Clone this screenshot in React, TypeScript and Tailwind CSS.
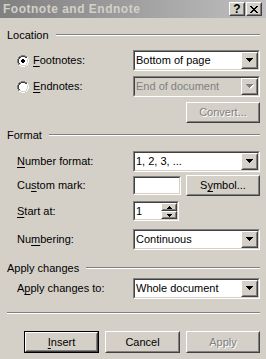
import React from "react";

const Sunken = ({ className = "", bg = "bg-white", children }: { className?: string; bg?: string; children?: React.ReactNode }) => (
  <div className={`border border-t-[#808080] border-l-[#808080] border-b-white border-r-white ${className}`}>
    <div className={`h-full w-full border border-t-[#404040] border-l-[#404040] border-b-[#d4d0c8] border-r-[#d4d0c8] ${bg}`}>
      {children}
    </div>
  </div>
);

const Raised = ({ className = "", children }: { className?: string; children?: React.ReactNode }) => (
  <div className={`border border-t-white border-l-white border-b-[#404040] border-r-[#404040] bg-[#d4d0c8] ${className}`}>
    <div className="h-full w-full border border-t-[#d4d0c8] border-l-[#d4d0c8] border-b-[#808080] border-r-[#808080] flex items-center justify-center">
      {children}
    </div>
  </div>
);

const Arrow = ({ disabled = false }: { disabled?: boolean }) => (
  <svg width="8" height="5" viewBox="0 0 8 5" className="overflow-visible">
    {disabled && <path d="M1 1h7v1H1zM2 2h5v1H2zM3 3h3v1H3zM4 4h1v1H4z" fill="#fff" />}
    <path d="M0 0h7v1H0zM1 1h5v1H1zM2 2h3v1H2zM3 3h1v1H3z" fill={disabled ? "#808080" : "#000"} />
  </svg>
);

const Combo = ({ value, disabled = false }: { value: string; disabled?: boolean }) => (
  <Sunken className="w-[127px] h-[21px]" bg={disabled ? "bg-[#d4d0c8]" : "bg-white"}>
    <div className="flex h-full">
      <div className={`flex-1 pl-[1px] flex items-center ${disabled ? "text-[#808080]" : "text-black"}`}>{value}</div>
      <Raised className="w-[17px] h-full">
        <Arrow disabled={disabled} />
      </Raised>
    </div>
  </Sunken>
);

const Button = ({ children, disabled = false, def = false, className = "" }: { children: React.ReactNode; disabled?: boolean; def?: boolean; className?: string }) => {
  const inner = (
    <Raised className="h-full w-full">
      <span className={disabled ? "text-[#808080] [text-shadow:1px_1px_0_#fff]" : "text-black"}>{children}</span>
    </Raised>
  );
  return def ? <div className={`border border-black ${className}`}>{inner}</div> : <div className={className}>{inner}</div>;
};

const Radio = ({ checked }: { checked?: boolean }) => (
  <svg width="12" height="12" viewBox="0 0 12 12">
    <path d="M4 0h4v1h2v1h1v2h1v4h-1v2h-1v1H8v1H4v-1H2v-1H1V8H0V4h1V2h1V1h2z" fill="#fff" />
    <path d="M4 0h4v1H4zM2 1h2v1H2zM8 1h2v1H8zM1 2h1v2H1zM0 4h1v4H0zM1 8h1v2H1z" fill="#808080" />
    <path d="M4 1h4v1H4zM2 2h2v1H2zM8 2h2v1H8zM2 3h1v1H2zM1 4h1v4H1zM2 8h1v1H2z" fill="#404040" />
    <path d="M10 8h1v2h-1zM11 4h1v4h-1zM10 10v1H8v-1zM8 11v1H4v-1zM4 11v-1H2v1z" fill="#fff" />
    <path d="M10 4h1v4h-1zM9 8h1v2H9zM8 10h1v1H8zM4 10h4v1H4zM2 9h2v1H2z" fill="#d4d0c8" />
    {checked && <path d="M5 4h2v1h1v2H7v1H5V7H4V5h1z" fill="#000" />}
  </svg>
);

const Header = ({ label }: { label: string }) => (
  <div className="flex items-center h-[14px] gap-[7px]">
    <span>{label}</span>
    <div className="flex-1 border-t border-t-[#808080] border-b border-b-white" />
  </div>
);

const U = ({ children }: { children: React.ReactNode }) => <span className="underline underline-offset-[2px]">{children}</span>;

const Row = ({ label, children, className = "" }: { label: React.ReactNode; children: React.ReactNode; className?: string }) => (
  <div className={`flex items-center ${className}`}>
    <div className="w-[126px] pl-[10px]">{label}</div>
    {children}
  </div>
);

export default function App() {
  return (
    <div className="w-[266px] h-[359px] bg-[#d4d0c8] font-['Liberation_Sans',Arial,sans-serif] text-[11px] text-black leading-none overflow-hidden">
      <div className="h-[18px] flex items-center justify-between bg-gradient-to-r from-[#808080] to-[#c0c0c0] pl-[3px] pr-[4px]">
        <span className="font-bold text-[12px] tracking-[0.5px] text-[#d4d0c8]">Footnote and Endnote</span>
        <div className="flex gap-[1px]">
          <Raised className="w-[16px] h-[14px]">
            <span className="font-bold text-[12px] leading-none">?</span>
          </Raised>
          <Raised className="w-[16px] h-[14px]">
            <svg width="8" height="7" viewBox="0 0 8 7">
              <path d="M0 0h2v1h1v1h2V1h1V0h2v1H7v1H6v1H5v1h1v1h1v1h1v1H6V6H5V5H3v1H2v1H0V6h1V5h1V4h1V3H2V2H1V1H0z" fill="#000" />
            </svg>
          </Raised>
        </div>
      </div>

      <div className="pl-[7px] pr-[6px]">
        <div className="mt-[10px]">
          <Header label="Location" />
        </div>

        <div className="mt-[8px] flex items-center">
          <div className="w-[126px] pl-[10px] flex items-center gap-[4px]">
            <Radio checked />
            <span><U>F</U>ootnotes:</span>
          </div>
          <Combo value="Bottom of page" />
        </div>

        <div className="mt-[5px] flex items-center">
          <div className="w-[126px] pl-[10px] flex items-center gap-[4px]">
            <Radio />
            <span><U>E</U>ndnotes:</span>
          </div>
          <Combo value="End of document" disabled />
        </div>

        <div className="mt-[5px] flex justify-end">
          <Button disabled className="w-[74px] h-[21px]">Convert...</Button>
        </div>

        <div className="mt-[5px]">
          <Header label="Format" />
        </div>

        <Row className="mt-[9px]" label={<span><U>N</U>umber format:</span>}>
          <Combo value="1, 2, 3, ..." />
        </Row>

        <Row className="mt-[3px]" label={<span>Cu<U>s</U>tom mark:</span>}>
          <div className="flex items-center gap-[5px]">
            <Sunken className="w-[48px] h-[19px]" />
            <Button className="w-[74px] h-[21px]">S<U>y</U>mbol...</Button>
          </div>
        </Row>

        <Row className="mt-[5px]" label={<span><U>S</U>tart at:</span>}>
          <Sunken className="w-[46px] h-[20px]">
            <div className="flex h-full">
              <div className="flex-1 pl-[1px] flex items-center">1</div>
              <div className="w-[16px] flex flex-col">
                <Raised className="flex-1">
                  <svg width="5" height="3" viewBox="0 0 5 3"><path d="M2 0h1v1h1v1h1v1H0V2h1V1h1z" fill="#000" /></svg>
                </Raised>
                <Raised className="flex-1">
                  <svg width="5" height="3" viewBox="0 0 5 3"><path d="M0 0h5v1H4v1H3v1H2V2H1V1H0z" fill="#000" /></svg>
                </Raised>
              </div>
            </div>
          </Sunken>
        </Row>

        <Row className="mt-[8px]" label={<span>Nu<U>m</U>bering:</span>}>
          <Combo value="Continuous" />
        </Row>

        <div className="mt-[11px]">
          <Header label="Apply changes" />
        </div>

        <Row className="mt-[3px]" label={<span>A<U>p</U>ply changes to:</span>}>
          <Combo value="Whole document" />
        </Row>

        <div className="mt-[13px] border-t border-t-[#808080] border-b border-b-white" />

        <div className="mt-[17px] flex gap-[6px] justify-end">
          <Button def className="w-[75px] h-[22px]"><U>I</U>nsert</Button>
          <Button className="w-[75px] h-[22px]">Cancel</Button>
          <Button disabled className="w-[74px] h-[22px]">Apply</Button>
        </div>
      </div>
    </div>
  );
}
